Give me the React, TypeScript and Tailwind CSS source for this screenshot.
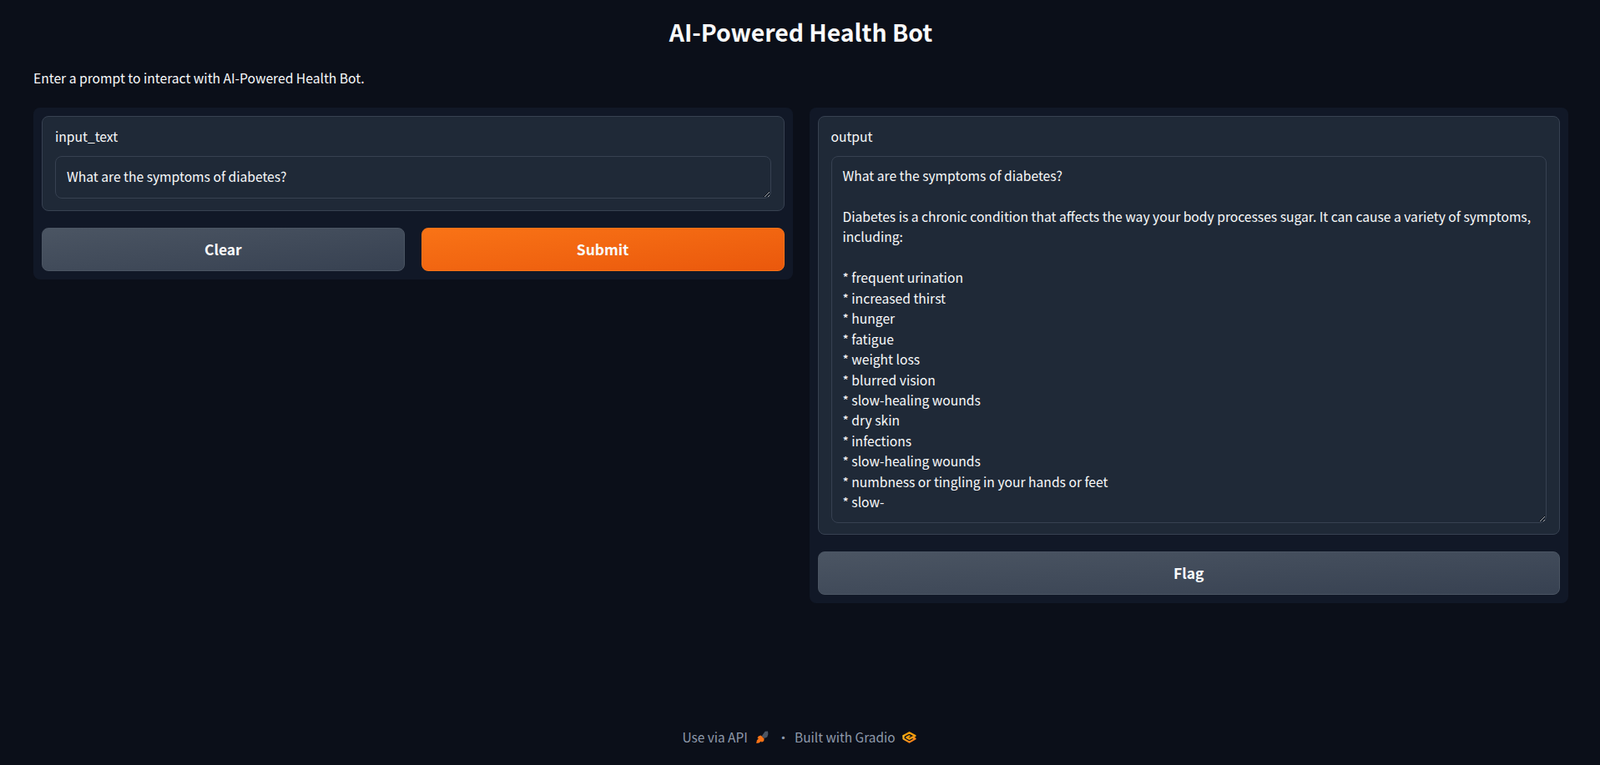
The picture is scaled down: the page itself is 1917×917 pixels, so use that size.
import { useState } from 'react';

const OUTPUT_TEXT = `What are the symptoms of diabetes?

Diabetes is a chronic condition that affects the way your body processes sugar. It can cause a variety of symptoms, including:

* frequent urination
* increased thirst
* hunger
* fatigue
* weight loss
* blurred vision
* slow-healing wounds
* dry skin
* infections
* slow-healing wounds
* numbness or tingling in your hands or feet
* slow-`;

function RocketIcon() {
  return (
    <svg width="15" height="16" viewBox="0 0 15 16" fill="none">
      <path d="M6.6 6.4 10.6.8 14 .4l.4 3.6-1.2 3.4-3.4 1.6z" fill="#4b5563" />
      <path d="M5.6 5.6l4 4-.4 2.6-2.6 1.6-.6-1.2-2.6 2-3.2.4.6-3.4 2-2.4-1.4-.6 1.4-2.2z" fill="#f97316" />
    </svg>
  );
}

function GradioLogo() {
  return (
    <svg width="17" height="14" viewBox="0 0 17 14" fill="none" strokeWidth="2.2" strokeLinejoin="round" strokeLinecap="round">
      <defs>
        <linearGradient id="gradioFill" x1="0" y1="0" x2="1" y2="1">
          <stop offset="0" stopColor="#fbbf24" />
          <stop offset="1" stopColor="#f97316" />
        </linearGradient>
      </defs>
      <path d="M1.5 5 8.5 1.2 15.5 5 8.5 8.8 5.3 7 8.5 5.3" stroke="#f59e0b" />
      <path d="M1.5 5.2v3.4l7 4 7-4L12 6.8" stroke="url(#gradioFill)" />
    </svg>
  );
}

function Block({ label, className, children }: { label: string; className: string; children: React.ReactNode }) {
  return (
    <div className={`bg-[#1f2937] border border-[#374151] rounded-lg px-[15px] pt-[12px] ${className}`}>
      <label className="block text-[15.65px] leading-[24px] text-[#f9fafb] mb-[11px]">{label}</label>
      {children}
    </div>
  );
}

export default function App() {
  const [inputText, setInputText] = useState('What are the symptoms of diabetes?');

  return (
    <div className="min-h-[917px] bg-[#0b0f19] text-[#f9fafb] flex flex-col pl-10 pr-[38px] font-['Noto_Sans_CJK_SC','Liberation_Sans',sans-serif]">
      <h1 className="text-center text-[28.35px] leading-[36px] font-semibold pt-[20px]">AI-Powered Health Bot</h1>
      <p className="text-[15.65px] leading-[24px] mt-[26px] mb-[23px]">Enter a prompt to interact with AI-Powered Health Bot.</p>

      <div className="flex items-start gap-5">
        <div className="flex-1 bg-[#111827] rounded-lg p-2.5 flex flex-col gap-5">
          <Block label="input_text" className="pb-[14px]">
            <textarea
              value={inputText}
              onChange={(e) => setInputText(e.target.value)}
              className="block w-full h-[51px] bg-[#1f2937] border border-[#374151] rounded-lg px-[13px] pt-[12px] pb-[10px] text-[15.65px] leading-[24px] text-[#f9fafb] outline-none overflow-hidden"
            />
          </Block>
          <div className="flex gap-5">
            <button className="flex-1 h-[52px] rounded-lg border border-[#4b5563] bg-gradient-to-br from-[#4b5563] to-[#374151] text-[17.4px] font-semibold">Clear</button>
            <button className="flex-1 h-[52px] rounded-lg border border-[#f97316] bg-gradient-to-br from-[#f97316] to-[#ea580c] text-[17.4px] font-semibold">Submit</button>
          </div>
        </div>

        <div className="flex-1 bg-[#111827] rounded-lg p-2.5 flex flex-col gap-5">
          <Block label="output" className="pb-[13px]">
            <textarea
              readOnly
              value={OUTPUT_TEXT}
              className="block w-full h-[440px] bg-[#1f2937] border border-[#374151] rounded-lg px-[13px] py-[11px] text-[15.65px] leading-[24.45px] text-[#f9fafb] outline-none overflow-hidden"
            />
          </Block>
          <button className="w-full h-[52px] rounded-lg border border-[#4b5563] bg-gradient-to-br from-[#4b5563] to-[#374151] text-[17.4px] font-semibold">Flag</button>
        </div>
      </div>

      <footer className="mt-auto h-[66px] pr-[4px] flex items-center justify-center text-[15.4px] text-[#8f9aab]">
        <span className="flex items-center gap-[10px]">Use via API <RocketIcon /></span>
        <span className="ml-[10px] mr-[6px]">·</span>
        <span className="flex items-center gap-2">Built with Gradio <GradioLogo /></span>
      </footer>
    </div>
  );
}
